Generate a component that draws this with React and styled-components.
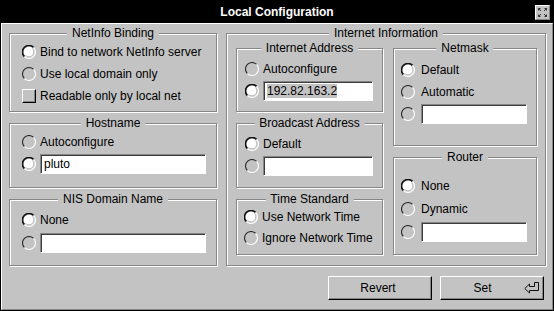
import styled, { createGlobalStyle } from "styled-components";

const PANEL = "#c3c3c3";
const SHADE = "#868686";

const GlobalStyle = createGlobalStyle`
  html, body {
    margin: 0;
    padding: 0;
    background: ${PANEL};
  }
  body {
    font-family: "Liberation Sans", Arial, Helvetica, sans-serif;
  }
`;

const Window = styled.div`
  width: 554px;
  height: 311px;
  box-sizing: border-box;
  border: 1px solid #000;
  background: ${PANEL};
  display: flex;
  flex-direction: column;
  font-size: 12px;
  color: #000;
`;

const TitleBar = styled.div`
  height: 22px;
  flex: none;
  background: #000;
  color: #fff;
  display: grid;
  grid-template-columns: 1fr auto 1fr;
  align-items: center;
  font-weight: bold;
  font-size: 12px;
  line-height: 14px;
`;

const Title = styled.div`
  grid-column: 2;
`;

const CloseBox = styled.svg`
  grid-column: 3;
  justify-self: end;
  margin-right: 3px;
  display: block;
`;

const Body = styled.div`
  flex: 1;
  display: flex;
  flex-direction: column;
  border-top: 1px solid #fff;
  border-left: 1px solid #fff;
  border-right: 1px solid ${SHADE};
  border-bottom: 1px solid ${SHADE};
  padding: 9px 6px 0 7px;
`;

const Main = styled.div`
  display: flex;
  gap: ${(p) => p.$gap}px;
  align-items: flex-start;
`;

const Column = styled.div`
  display: flex;
  flex-direction: column;
  gap: 11px;
  width: ${(p) => p.$w}px;
`;

const Row = styled.div`
  display: flex;
  align-items: center;
  white-space: nowrap;
`;

const Group = styled.div`
  position: relative;
  box-sizing: border-box;
  width: ${(p) => (p.$w ? `${p.$w}px` : "auto")};
  height: ${(p) => p.$h}px;
  border: 1px solid ${SHADE};
  box-shadow: inset 1px 1px 0 #fff, 1px 1px 0 #fff;
  padding: ${(p) => p.$pt}px ${(p) => p.$pr ?? 9}px 0 ${(p) => p.$pl}px;
  display: flex;
  flex-direction: column;

  & > ${Row} {
    height: ${(p) => p.$rh}px;
    gap: ${(p) => p.$gap ?? 4}px;
  }
`;

const Legend = styled.div`
  position: absolute;
  top: -8px;
  left: 50%;
  transform: translateX(-50%);
  background: ${PANEL};
  padding: 0 5px;
  line-height: 14px;
  white-space: nowrap;
`;

const Label = styled.span`
  line-height: 14px;
`;

const Field = styled.div`
  flex: 1;
  height: 20px;
  box-sizing: border-box;
  background: #fff;
  border: 1px solid;
  border-color: ${SHADE} #fff #fff ${SHADE};
  box-shadow: inset 1px 1px 0 #3c3c3c;
  padding: 0 2px 0 3px;
  display: flex;
  align-items: center;
  line-height: 14px;
`;

const Selected = styled.span`
  background: ${PANEL};
`;

const CheckBox = styled.span`
  display: block;
  width: 14px;
  height: 14px;
  flex: none;
  box-sizing: border-box;
  border: 1px solid;
  border-color: #fff #000 #000 #fff;
  box-shadow: inset -1px -1px 0 ${SHADE};
  background: ${PANEL};
`;

const RadioIcon = styled.svg`
  display: block;
  flex: none;
`;

const Buttons = styled.div`
  display: flex;
  justify-content: flex-end;
  gap: 8px;
  margin-top: 10px;
  padding-right: 2px;
`;

const Button = styled.button`
  width: 104px;
  height: 24px;
  box-sizing: border-box;
  padding: 0 4px 0 0;
  margin: 0;
  display: flex;
  align-items: center;
  background: ${PANEL};
  border: 1px solid;
  border-color: #fff #000 #000 #fff;
  box-shadow: inset -1px -1px 0 ${SHADE};
  font: 12px "Liberation Sans", Arial, Helvetica, sans-serif;
  color: #000;
`;

const ButtonLabel = styled.span`
  flex: 1;
  text-align: center;
  line-height: 14px;
`;

const Radio = ({ on }) => (
  <RadioIcon width="14" height="14" viewBox="0 0 14 14">
    {on && <circle cx="7" cy="7" r="5.6" fill="#fff" />}
    {on && (
      <path d="M10.5 3.5A4.95 4.95 0 0 1 3.5 10.5" fill="none" stroke="#b0b0b0" strokeWidth="1" />
    )}
    <path
      d="M2.4 11.6A6.5 6.5 0 0 1 11.6 2.4"
      fill="none"
      stroke={on ? "#111" : "#2a2a2a"}
      strokeWidth={on ? 1.6 : 1.1}
    />
    <path d="M11.6 2.4A6.5 6.5 0 0 1 2.4 11.6" fill="none" stroke="#fff" strokeWidth="1.1" />
  </RadioIcon>
);

const ReturnIcon = () => (
  <svg width="15" height="12" viewBox="0 0 15 12" style={{ display: "block", flex: "none" }}>
    <path
      d="M0.8 6.5L5.5 2V4.5H10.5V0.5H14.5V8.5H5.5V11Z"
      fill="none"
      stroke="#111"
      strokeWidth="1"
      strokeLinejoin="miter"
    />
  </svg>
);

const CloseGlyph = () => (
  <CloseBox width="15" height="15" viewBox="0 0 15 15">
    <rect x="0" y="0" width="15" height="15" fill={PANEL} />
    <path d="M0.5 14.5V0.5H14.5" fill="none" stroke="#fff" />
    <path d="M0.5 14.5H14.5V0.5" fill="none" stroke={SHADE} />
    <path
      d="M3.5 3.5L6 6M3.5 3.5V5.5M3.5 3.5H5.5M11.5 3.5L9 6M11.5 3.5V5.5M11.5 3.5H9.5M3.5 11.5L6 9M3.5 11.5V9.5M3.5 11.5H5.5M11.5 11.5L9 9M11.5 11.5V9.5M11.5 11.5H9.5"
      fill="none"
      stroke="#333"
      strokeWidth="1"
    />
  </CloseBox>
);

const Choice = ({ on, children }) => (
  <Row>
    <Radio on={on} />
    <Label>{children}</Label>
  </Row>
);

const FieldChoice = ({ on, children }) => (
  <Row>
    <Radio on={on} />
    <Field>{children}</Field>
  </Row>
);

export default function App() {
  return (
    <>
      <GlobalStyle />
      <Window>
        <TitleBar>
          <Title>Local Configuration</Title>
          <CloseGlyph />
        </TitleBar>
        <Body>
          <Main $gap={9}>
            <Column $w={208}>
              <Group $h={79} $pt={7} $pl={12} $pr={10} $rh={22}>
                <Legend>NetInfo Binding</Legend>
                <Choice on>Bind to network NetInfo server</Choice>
                <Choice>Use local domain only</Choice>
                <Row>
                  <CheckBox />
                  <Label>Readable only by local net</Label>
                </Row>
              </Group>
              <Group $h={65} $pt={7} $pl={12} $pr={10} $rh={22}>
                <Legend>Hostname</Legend>
                <Choice>Autoconfigure</Choice>
                <FieldChoice on>pluto</FieldChoice>
              </Group>
              <Group $h={67} $pt={8} $pl={12} $pr={10} $rh={23}>
                <Legend>NIS Domain Name</Legend>
                <Choice on>None</Choice>
                <FieldChoice />
              </Group>
            </Column>

            <Group $w={320} $h={233} $pt={14} $pl={9} $pr={7}>
              <Legend>Internet Information</Legend>
              <Main $gap={10}>
                <Column $w={147}>
                  <Group $h={64} $pt={9} $pl={8} $rh={22}>
                    <Legend>Internet Address</Legend>
                    <Choice>Autoconfigure</Choice>
                    <FieldChoice on>
                      <Selected>192.82.163.2</Selected>
                    </FieldChoice>
                  </Group>
                  <Group $h={65} $pt={9} $pl={8} $rh={22}>
                    <Legend>Broadcast Address</Legend>
                    <Choice on>Default</Choice>
                    <FieldChoice />
                  </Group>
                  <Group $h={56} $pt={6} $pl={7} $rh={21}>
                    <Legend>Time Standard</Legend>
                    <Choice on>Use Network Time</Choice>
                    <Choice>Ignore Network Time</Choice>
                  </Group>
                </Column>
                <Column $w={144}>
                  <Group $h={98} $pt={10} $pl={7} $rh={22} $gap={6}>
                    <Legend>Netmask</Legend>
                    <Choice on>Default</Choice>
                    <Choice>Automatic</Choice>
                    <FieldChoice />
                  </Group>
                  <Group $h={98} $pt={16} $pl={7} $rh={23} $gap={6}>
                    <Legend>Router</Legend>
                    <Choice on>None</Choice>
                    <Choice>Dynamic</Choice>
                    <FieldChoice />
                  </Group>
                </Column>
              </Main>
            </Group>
          </Main>

          <Buttons>
            <Button>
              <ButtonLabel>Revert</ButtonLabel>
            </Button>
            <Button>
              <ButtonLabel>Set</ButtonLabel>
              <ReturnIcon />
            </Button>
          </Buttons>
        </Body>
      </Window>
    </>
  );
}
